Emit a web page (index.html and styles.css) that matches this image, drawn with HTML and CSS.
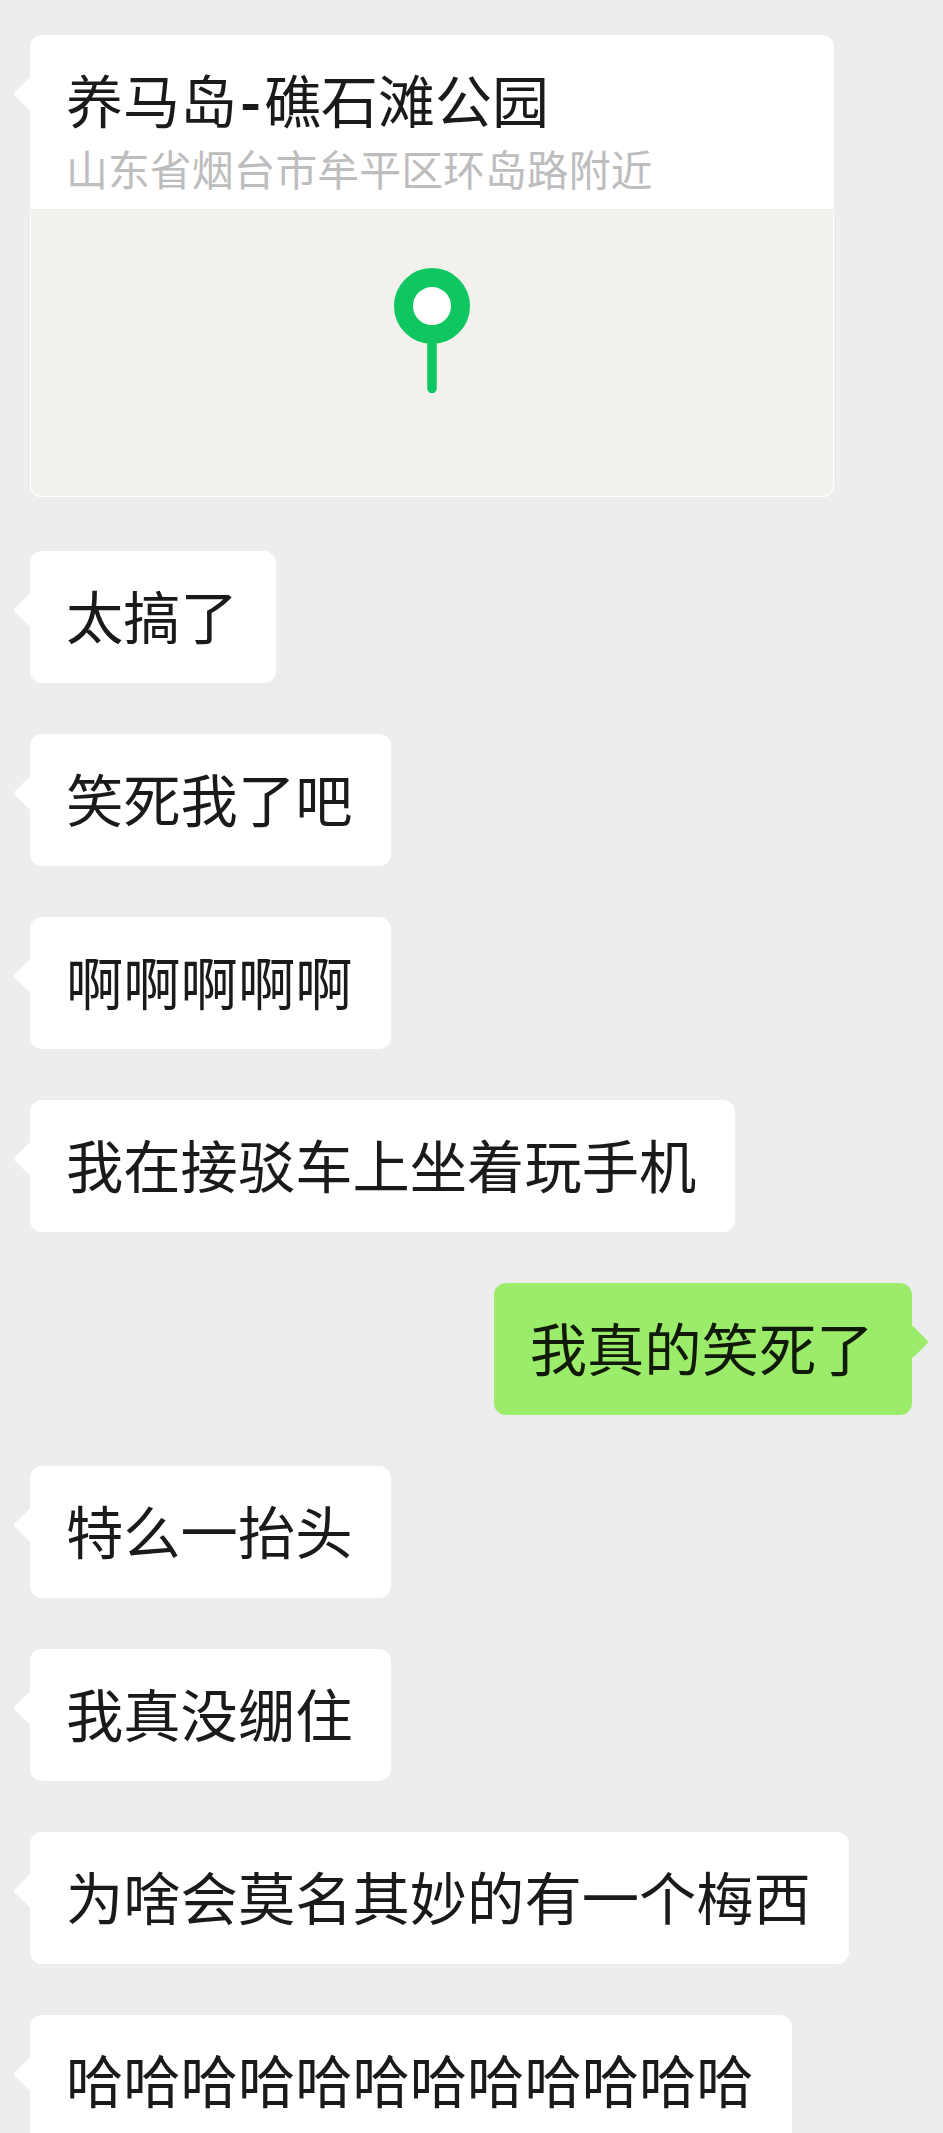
FILE: index.html
```html
<!DOCTYPE html>
<html lang="zh-CN">
<head>
<meta charset="utf-8">
<title>聊天记录</title>
<link rel="stylesheet" href="styles.css">
</head>
<body>
<main class="chat">
  <div class="row row-card">
    <div class="bubble card">
      <div class="card-head">
        <div class="card-title">养马岛<span class="dash">-</span>礁石滩公园</div>
        <div class="card-sub">山东省烟台市牟平区环岛路附近</div>
      </div>
      <div class="card-map">
        <svg class="pin" width="76" height="125" viewBox="0 0 76 125" aria-hidden="true">
          <line x1="38" y1="70" x2="38" y2="120.5" stroke="#10c661" stroke-width="9.5" stroke-linecap="round"/>
          <circle cx="38" cy="38" r="28.5" fill="#fff" stroke="#10c661" stroke-width="19"/>
        </svg>
      </div>
    </div>
  </div>
  <div class="row"><div class="bubble">太搞了</div></div>
  <div class="row"><div class="bubble">笑死我了吧</div></div>
  <div class="row"><div class="bubble">啊啊啊啊啊</div></div>
  <div class="row"><div class="bubble">我在接驳车上坐着玩手机</div></div>
  <div class="row row-me"><div class="bubble me">我真的笑死了</div></div>
  <div class="row"><div class="bubble">特么一抬头</div></div>
  <div class="row"><div class="bubble">我真没绷住</div></div>
  <div class="row"><div class="bubble">为啥会莫名其妙的有一个梅西</div></div>
  <div class="row"><div class="bubble">哈哈哈哈哈哈哈哈哈哈哈哈</div></div>
</main>
</body>
</html>
```
FILE: styles.css
```css
html, body {
  margin: 0;
  padding: 0;
  height: 100%;
  overflow: hidden;
  background: #ededed;
}

.chat {
  display: flex;
  flex-direction: column;
  gap: 51px;
  padding: 35px 31px 0 30px;
  font-family: "Noto Sans CJK SC", "Noto Sans", sans-serif;
  color: #1a1a1a;
}

.row {
  display: flex;
  justify-content: flex-start;
}

.row-card {
  margin-bottom: 3px;
}

.row-me {
  justify-content: flex-end;
}

.bubble {
  position: relative;
  box-sizing: border-box;
  height: 132px;
  padding: 0 38.5px 4px 36px;
  display: flex;
  align-items: center;
  background: #fff;
  border-radius: 12px;
  font-size: 57.3px;
  line-height: 1;
  white-space: nowrap;
}

.bubble::before {
  content: "";
  position: absolute;
  left: -12px;
  top: 47px;
  width: 24px;
  height: 24px;
  background: inherit;
  border-radius: 3px;
  transform: rotate(45deg);
}

.me {
  background: #9bec6b;
  color: #111a08;
}

.me::before {
  left: auto;
  right: -12px;
}

.card {
  display: block;
  width: 804px;
  height: 462px;
  padding: 0;
}

.card-head {
  box-sizing: border-box;
  height: 175px;
  padding: 27px 36px 0;
  border-bottom: 1px solid #e9e9e7;
}

.card-title {
  font-size: 57px;
  line-height: 72px;
}

.dash {
  margin: 0 3px;
  font-weight: 700;
}

.card-sub {
  margin-top: 1px;
  font-size: 41.9px;
  line-height: 66px;
  color: #bdbdbd;
}

.card-map {
  box-sizing: border-box;
  height: 287px;
  padding-top: 58px;
  display: flex;
  justify-content: center;
  align-items: flex-start;
  background: #f2f1ed;
  border: solid #fff;
  border-width: 0 1px 1px;
  border-radius: 0 0 12px 12px;
}

.pin {
  display: block;
}
```
